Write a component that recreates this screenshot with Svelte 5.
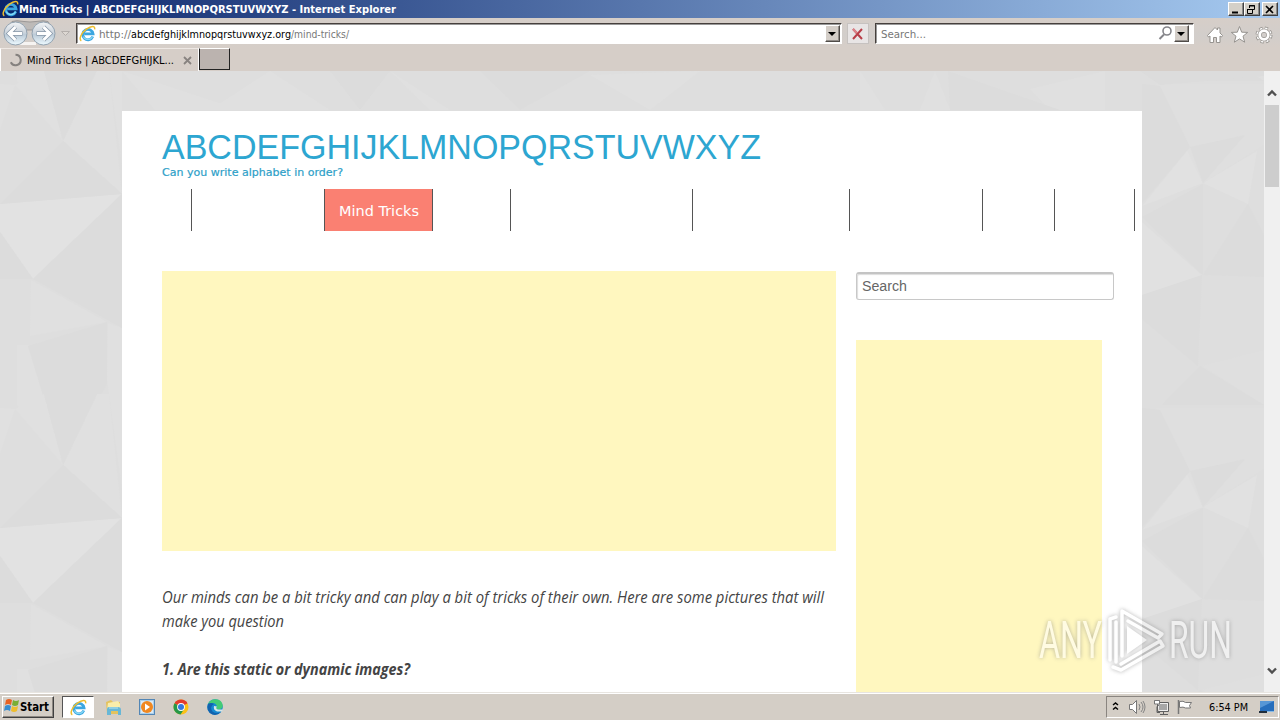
<script>
  const menu = [30, 133, 108, 78, 182, 157, 133, 72, 80];
  const tile = 324;
</script>

{#snippet line(text, w, h, base, cls)}
  <svg class="line" width={w} height={h}><text class={cls} x="0" y={base} textLength={w} lengthAdjust="spacingAndGlyphs">{text}</text></svg>
{/snippet}

{#snippet ie(s)}
  <svg width={s} height={s} viewBox="0 0 16 16">
    <path d="M13 10.8A4.900 4.900 0 1 1 13.300 8.400H5" fill="none" stroke="#3ba6e0" stroke-width="2.500" />
    <path d="M12.800 10.800A4.800 4.800 0 0 1 4 10.800" fill="none" stroke="#86d8f6" stroke-width="1" />
    <path d="M2.200 14.800C-.6 13.600 2.300 7.300 7 3.900C11.200.8 15.500.1 14.700 4.200" fill="none" stroke="#edbd2e" stroke-width="1.400" />
  </svg>
{/snippet}

<div class="screen">
  <header class="title">
    <span class="tico">{@render ie(17)}</span>
    {@render line('Mind Tricks | ABCDEFGHIJKLMNOPQRSTUVWXYZ - Internet Explorer', 377, 18, 13, 'ui bold white')}
    <div class="win">
      <button aria-label="Minimize"><svg width="13" height="11"><path d="M3 8.5h6" stroke="#000" stroke-width="2" /></svg></button>
      <button aria-label="Restore"><svg width="13" height="11"><path d="M4.500 4V1.500h5v4H8M4 2h6M2.500 5.500h5v4h-5zM2 5.500h6" fill="none" stroke="#000" /></svg></button>
      <button class="close" aria-label="Close"><svg width="13" height="11"><path d="M3 2l7 7M10 2L3 9" stroke="#000" stroke-width="1.600" /></svg></button>
    </div>
  </header>

  <div class="toolbar">
    <svg width="76" height="29" viewBox="0 18 76 29">
      <defs><linearGradient id="orb" x2="0" y2="1"><stop stop-color="#f2f4f6" /><stop offset=".45" stop-color="#cdd5dd" /><stop offset=".55" stop-color="#bccbd8" /><stop offset="1" stop-color="#edfaff" /></linearGradient></defs>
      <path d="M12 21.500Q16 20 24 21.500Q30 22.500 36 21.500Q44 20 48 21.500L53 30H6z" fill="#bdbab8" stroke="#9b9897" />
      <path d="M24 42h12v3H14z" fill="#f6f4f2" />
      <circle cx="15.500" cy="33.500" r="11.500" fill="url(#orb)" stroke="#92a2b0" />
      <circle cx="43.500" cy="33.500" r="11.500" fill="url(#orb)" stroke="#92a2b0" />
      <path d="M22.500 33.500H9M15.500 27l-6.500 6.500 6.500 6.500M36.500 33.500h13.500M43.500 27l6.500 6.500-6.500 6.500" fill="none" stroke="#8797a8" stroke-width="4.400" />
      <path d="M22 33.500H9M15.500 27l-6.500 6.500 6.500 6.500M37 33.500h13M43.500 27l6.500 6.500-6.500 6.500" fill="none" stroke="#fff" stroke-width="3" />
      <path d="M61.500 31.500h8l-4 4z" fill="#ddd8d3" stroke="#b4afac" />
    </svg>
    <div class="field addr">
      <span class="fico">{@render ie(17)}</span>
      {@render line('http://', 32, 19, 14, 'ui gray')}
      {@render line('abcdefghijklmnopqrstuvwxyz.org', 160, 19, 14, 'ui')}
      {@render line('/mind-tricks/', 58, 19, 14, 'ui gray')}
      <div class="drop"><svg width="12" height="16"><path d="M2 6h8L6 10z" /></svg></div>
    </div>
    <div class="stop"><svg width="20" height="20"><path d="M5 5l9 10M14 5L5 15" stroke="#b83e48" stroke-width="2" fill="none" /><path d="M5 5l4 4" stroke="#dd848a" stroke-width="2" /></svg></div>
    <div class="field find">
      {@render line('Search...', 45, 19, 14, 'ui gray')}
      <svg class="mag" width="15" height="17"><circle cx="9" cy="6" r="4" fill="none" stroke="#85858a" stroke-width="1.600" /><path d="M6 9.500L1.500 14" stroke="#85858a" stroke-width="2" /></svg>
      <div class="drop"><svg width="12" height="16"><path d="M2 6h8L6 10z" /></svg></div>
    </div>
    <svg class="tools" width="72" height="24" viewBox="1204 23 72 24">
      <g fill="#fff" stroke="#96938f" stroke-linejoin="round">
        <path d="M1207.500 35.500l7.500-8 2.500 2.500v-2h2.500v5l2.500 2.500-1 1.500-1.500-1v6.500h-3.500v-5h-3v5h-3.500V36l-1.500 1z" />
        <path d="M1239.500 26.500l2.200 5.700 6 .2-4.700 3.800 1.700 6-5.200-3.300-5.200 3.300 1.700-6-4.700-3.800 6-.2z" />
        <circle cx="1264" cy="35" r="6" fill="none" stroke="#96938f" stroke-width="5" stroke-dasharray="2.700 2.012" />
        <circle cx="1264" cy="35" r="6" fill="none" stroke="#fff" stroke-width="3.300" stroke-dasharray="1.900 2.812" stroke-dashoffset="-.4" />
        <circle cx="1264" cy="35" r="4.300" fill="none" stroke="#96938f" stroke-width="4" />
        <circle cx="1264" cy="35" r="4.300" fill="none" stroke="#fff" stroke-width="2.800" />
      </g>
    </svg>
  </div>

  <div class="tabs">
    <div class="tab">
      <svg width="14" height="14"><path d="M6.500 1.800a5.200 5.200 0 1 1-4.700 7.500" fill="none" stroke="#85817e" stroke-width="2" /></svg>
      {@render line('Mind Tricks | ABCDEFGHIJKL...', 147, 23, 15, 'ui')}
      <svg class="x" width="9" height="9"><path d="M1 1l7 7M8 1L1 8" stroke="#888380" stroke-width="1.800" /></svg>
    </div>
    <div class="newtab"></div>
  </div>

  <main>
    <svg class="backdrop" width="1264" height="621">
      <rect width="1264" height="621" fill="#dedede" />
      {#each [-tile, 0, tile] as dy}
        <g transform="translate(0 {dy - 1})">
          <path d="M0 134L122 124 33 209 0 162z" fill="#e2e2e2" />
          <path d="M63 71L97 0H109L122 124zM15 15L44 0 63 71zM31 210L107 252 30 266zM17 275H28L63 391 17 335zM108 253L122 258V420L107 310zM0 14L15 15 0 60z" fill="#e0e0e0" />
          <path d="M33 209L122 124V258zM44 0H97L63 71zM0 134L63 71 122 124zM28 276L107 252V314L63 391zM0 162L33 209H0z" fill="#dcdcdc" />
          <path d="M1142 136L1190 77 1203 113zM1203 113L1257 81 1248 134zM1142 152L1202 205 1142 225z" fill="#e1e1e1" />
          <path d="M1155 14H1264V75L1203 113zM1202 296L1264 280V335z" fill="#dfdfdf" />
          <path d="M1142 147L1203 114V205zM1142 225L1202 205 1198 296 1142 249zM1203 205L1248 134 1264 165V207zM1162 335L1200 296 1264 335zM1190 77L1245 65 1203 113zM1142 14L1160 16 1190 77 1142 133z" fill="#dcdcdc" />
        </g>
      {/each}
      <path d="M122 0L240 39H155zM270 0L330 39H210zM390 0L450 39H430zM590 4L700 0 650 39zM860 0L885 39H860zM935 0L950 39H920zM1030 18L1105 0V39H1050z" fill="#e0e0e0" />
      <path d="M330 0H390L360 39zM480 0H590L520 39zM948 0L1060 39H950zM1160 14L1264 5V0H1140z" fill="#dcdcdc" />
    </svg>

    <div class="page">
      <div class="brand">{@render line('ABCDEFGHIJKLMNOPQRSTUVWXYZ', 599, 50, 48, 'logo')}</div>
      {@render line('Can you write alphabet in order?', 181, 28, 15, 'tag')}
      <nav>
        {#each menu as w, i}
          <div class="item" class:active={i === 2} style:width="{w}px">
            {#if i === 2}{@render line('Mind Tricks', 80, 42, 27, 'verdana white')}{/if}
          </div>
        {/each}
      </nav>
      <div class="columns">
        <article>
          <div class="ad wide"></div>
          {@render line('Our minds can be a bit tricky and can play a bit of tricks of their own. Here are some pictures that will', 662, 24, 17, 'body')}
          {@render line('make you question', 122, 48, 17, 'body')}
          {@render line('1. Are this static or dynamic images?', 248, 24, 17, 'body bold')}
        </article>
        <aside>
          <div class="search">{@render line('Search', 45, 24, 16, 'arial')}</div>
          <div class="ad tall"></div>
        </aside>
      </div>
    </div>

    <div class="scroll">
      <svg width="16" height="34"><path d="M4 24.500l4-4 4 4" fill="none" stroke="#505050" stroke-width="2.400" /></svg>
      <div class="thumb"></div>
      <svg class="down" width="16" height="34"><path d="M4 10.500l4 4 4-4" fill="none" stroke="#505050" stroke-width="2.400" /></svg>
    </div>

    <svg class="mark" width="220" height="80" viewBox="1026 601 220 80">
      <text class="run" x="1039" y="658" textLength="63" lengthAdjust="spacingAndGlyphs">ANY</text>
      <text class="run" x="1169" y="658" textLength="63" lengthAdjust="spacingAndGlyphs">RUN</text>
      <g fill="none" stroke="#fff" stroke-width="3.500" stroke-linejoin="round" stroke-linecap="round">
        <path d="M1110 660V619L1116 617M1116 662V622" />
        <path d="M1122 656V611L1162 634L1158 638L1128 621M1121 664L1160 641L1163 646L1121 670L1113 667" />
      </g>
      <path d="M1127 626L1147 640 1127 654z" fill="#fff" />
    </svg>
  </main>

  <footer>
    <div class="start">
      <svg width="17" height="18"><path d="M3 3q3-2 6 0L8 8Q5 6 2 8z" fill="#e86324" /><path d="M10 3q3 2 6 0l-1 5q-3 2-6 0z" fill="#79ae35" /><path d="M2 9q3-2 6 0l-1 5q-3-2-6 0z" fill="#388ed1" /><path d="M9 9q3 2 6 0l-1 5q-3 2-6 0z" fill="#efbd2d" /></svg>
      {@render line('Start', 29, 20, 14, 'ui bold start-text')}
    </div>
    <div class="task">{@render ie(17)}</div>
    <svg class="apps" width="126" height="26" viewBox="100 694 126 26">
      <path d="M106 702l5-2 2 2h7v12h-13z" fill="#e4c35e" /><path d="M108 703l10-2 2 3v6h-13z" fill="#f9edaa" /><path d="M107 715v-6q0-2 2-2h9q3 0 3 3v5h-3v-4h-7v4z" fill="#67b7d7" /><path d="M109 708h9" stroke="#b9e6ef" />
      <rect x="139.500" y="699.500" width="15" height="15" fill="#aad0ec" stroke="#5386b5" /><path d="M141 701h12v12h-12z" fill="#dceaf5" /><circle cx="147" cy="707" r="6" fill="#f08821" /><path d="M145 703.500v7l5-3.500z" fill="#fff" />
      <circle cx="181" cy="707" r="7.500" fill="#fbc116" /><path d="M181 707L174.500 703.200A7.500 7.500 0 0 1 187.500 703.200z" fill="#e33b2e" /><path d="M181 707L174.500 703.200A7.500 7.500 0 0 0 180.500 714.500L184.500 708.500z" fill="#269849" /><path d="M178 702h9l-1 2h-8z" fill="#e33b2e" /><circle cx="181" cy="707" r="3.900" fill="#fff" /><circle cx="181" cy="707" r="3" fill="#3578df" />
      <circle cx="215" cy="707" r="7.800" fill="#1689d1" /><path d="M208 704q2-5 8-4.800 6 .3 6.800 6.300-.3 4.500-5.800 4-2-1 0-3-1-4-5-3.500z" fill="#43cb76" /><path d="M208 704q3-2 6 0-5 3-1.500 7.500 4 3 9 0-4 4.500-9 3-7-3-4.500-10.500" fill="#1263ae" /><path d="M214 706q-1 4 3 5.500h5l1-2h-5q-3-1-1-3z" fill="#d5e7e9" />
    </svg>
    <div class="tray">
      <svg width="88" height="20" viewBox="1109 697 88 20">
        <path d="M1113 705l2.500-2 2.500 2M1113 709.500l2.500-2 2.500 2" fill="none" stroke="#000" stroke-width="1.500" />
        <path d="M1129.500 704.500h3l4-4v13l-4-4h-3z" fill="#fff" stroke="#777" /><path d="M1139 704q2 3 0 6M1141 702q4 5 0 10M1143 701q4 6 0 12" fill="none" stroke="#848484" />
        <path d="M1157.500 702.500h11v9h-11zM1160 714.500h8M1163.500 712v2M1154.500 700.500h5v4l-2.500 2v6h3" fill="#eee" stroke="#606060" /><path d="M1159 704h8v6h-8z" fill="#a7a7a7" /><path d="M1154.500 700.500h5v3.500h-5z" fill="#fff" stroke="#777" />
        <path d="M1178.500 700v14" stroke="#777" stroke-width="1.500" /><path d="M1179.500 701.500q4-1 6 1h6l-2 3 1 2.500h-5q-2-1.500-6-.5z" fill="#fff" stroke="#777" />
      </svg>
      {@render line('6:54 PM', 39, 20, 14, 'ui clock')}
      <svg class="desk" width="17" height="18"><path d="M2 3h14v10H2z" fill="#276ebc" /><path d="M2 3h14L2 10z" fill="#5796d5" /><path d="M1 13h8v2H1z" fill="#202d3b" /><path d="M9 13h7v1H9z" fill="#8abbe5" /></svg>
    </div>
  </footer>
</div>

<style>
  :global(body) { margin: 0; }
  svg { display: block; flex: none; }
  .line { overflow: visible; }
  .screen { width: 1280px; height: 720px; overflow: hidden; display: grid; grid-template-rows: 18px 29px 24px 621px 28px; background: #d6cec8; }
  .title { display: flex; background: linear-gradient(90deg, #0a246a, #a6caf0); }
  .tico { width: 17px; margin-left: 2px; }
  .win { margin: 2px 2px 0 auto; display: flex; height: 14px; }
  button { width: 16px; height: 14px; padding: 0; background: #d4d0c8; border: 1px solid; border-color: #fff #404040 #404040 #fff; box-shadow: inset -1px -1px #888; }
  .close { margin-left: 2px; }
  .toolbar { display: flex; background: linear-gradient(#d6cec8, #d2cecb 60%, #d6cec8); }
  .field { height: 19px; margin-top: 5px; display: flex; background: #fff; border: 1px solid; border-color: #46403d #fff #fff #46403d; box-shadow: inset 1px 1px #999; }
  .addr { width: 764px; }
  .fico { width: 17px; margin: 1px 3px 0 2px; }
  .drop { width: 13px; height: 15px; margin: 1px 1px 0 auto; background: #d4cec8; border: 1px solid; border-color: #fff #504c49 #504c49 #fff; box-shadow: inset -1px -1px #918c88; }
  .stop { box-sizing: border-box; width: 22px; height: 21px; margin: 5px 6px 0 5px; border: 1px solid #c6c2c0; background: #e8e5e5; }
  .find { width: 312px; padding-left: 5px; }
  .find .drop { margin: 1px 4px 0 0; }
  .mag { margin: 1px 1px 0 auto; }
  .tools { margin: 5px 0 0 10px; }
  .tabs { display: flex; }
  .tab { box-sizing: border-box; width: 199px; height: 23px; margin-top: 1px; padding-left: 8px; display: flex; border-left: 1px solid #fff; border-top: 1px solid #eee8e4; border-right: 1px solid #fff; }
  .tab > svg:first-child { margin: 4px 4px 0 0; }
  .tab .x { margin: 7px 0 0 9px; }
  .newtab { box-sizing: border-box; width: 31px; height: 22px; margin-top: 1px; background: #bbb3af; border: 1px solid; border-color: #fff #222 #222 #222; }
  main { display: grid; grid-template: 621px / 1264px 16px; overflow: hidden; position: relative; }
  .backdrop, .page { grid-area: 1 / 1; }
  .page { width: 980px; height: 581px; margin: 40px 0 0 122px; padding-left: 40px; background: #fff; overflow: hidden; }
  .brand { height: 50px; }
  nav { height: 42px; display: flex; }
  .item { box-sizing: border-box; flex: none; border-right: 1px solid #555; display: flex; }
  .active { background: #fa8072; padding-left: 14px; }
  .columns { display: flex; gap: 20px; padding-top: 40px; }
  article { width: 674px; }
  .ad { background: #fff7bf; }
  .wide { height: 280px; margin-bottom: 35px; }
  .tall { width: 246px; height: 352px; margin-top: 40px; }
  .search { box-sizing: border-box; width: 258px; height: 28px; margin-top: 1px; padding: 1px 0 0 5px; border: 1px solid #c8c8c8; border-top: 2px solid #c4c4c4; border-radius: 3px; box-shadow: inset 1px 1px 1px #ddd; }
  .scroll { background: #f0f0f0; display: flex; flex-direction: column; }
  .thumb { width: 14px; height: 82px; margin-left: 1px; background: #cdcdcd; }
  .down { margin-top: auto; }
  .mark { position: absolute; left: 1026px; top: 530px; opacity: .55; filter: drop-shadow(0 0 2px #777); }
  .run { font: 400 51px Roboto, sans-serif; fill: #fff; }
  footer { display: flex; background: #d4cec6; box-shadow: inset 0 1px #e8e5e0, inset 0 2px #fff; }
  .start { box-sizing: border-box; width: 52px; height: 22px; margin: 4px 0 0 2px; display: flex; border: 1px solid; border-color: #fff #404040 #404040 #fff; box-shadow: inset -1px -1px #8d8882; }
  .task { box-sizing: border-box; width: 32px; height: 22px; margin: 4px 0 0 8px; padding: 2px 0 0 7px; background: #fff; border: 1px solid; border-color: #555 #fff #fff #555; }
  .apps { margin: 2px 0 0 6px; }
  .tray { box-sizing: border-box; width: 173px; height: 22px; margin: 4px 1px 0 auto; padding-left: 2px; display: flex; border: 1px solid; border-color: #8a8580 #fff #fff #8a8580; }
  .tray > svg:nth-child(2) { margin-left: 12px; }
  .desk { margin: 1px 0 0 10px; }
  text { white-space: pre; }
  .ui { font: 11px "DejaVu Sans Condensed", "DejaVu Sans", sans-serif; fill: #000; }
  .ui.bold { font-weight: bold; }
  .white { fill: #fff !important; }
  .ui.gray { fill: #777; }
  .ui.start-text { font-size: 12px; }
  .logo { font: 35.500px "Liberation Sans", Arial, sans-serif; fill: #2da6d1; }
  .tag { font: 11px "DejaVu Sans", sans-serif; fill: #2da0c8; stroke: #2da0c8; stroke-width: .2px; }
  .verdana { font: 14px "DejaVu Sans", sans-serif; }
  .body { font: italic 15.500px "Open Sans", "Noto Sans", sans-serif; fill: #444; }
  .body.bold { font-weight: bold; }
  .arial { font: 14px "Liberation Sans", Arial, sans-serif; fill: #666; }
</style>
